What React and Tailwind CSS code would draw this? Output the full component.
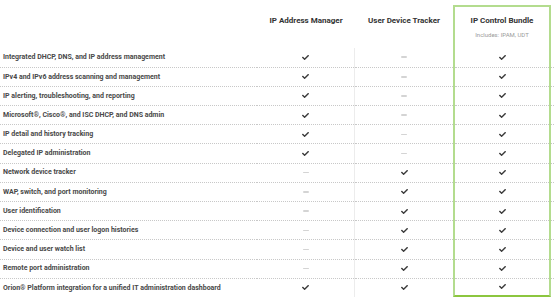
import React from "react";
import { FaCheck } from "react-icons/fa";

const rows = [
  ["Integrated DHCP, DNS, and IP address management", 1, 0],
  ["IPv4 and IPv6 address scanning and management", 1, 0],
  ["IP alerting, troubleshooting, and reporting", 1, 0],
  ["Microsoft®, Cisco®, and ISC DHCP, and DNS admin", 1, 0],
  ["IP detail and history tracking", 1, 0],
  ["Delegated IP administration", 1, 0],
  ["Network device tracker", 0, 1],
  ["WAP, switch, and port monitoring", 0, 1],
  ["User identification", 0, 1],
  ["Device connection and user logon histories", 0, 1],
  ["Device and user watch list", 0, 1],
  ["Remote port administration", 0, 1],
  ["Orion® Platform integration for a unified IT administration dashboard", 1, 1],
];

function Mark({ on }) {
  return on ? (
    <FaCheck className="text-[#3a3a3a]" size={7} />
  ) : (
    <div className="w-[6px] h-[1.5px] bg-[#d4d4d4] rounded-full" />
  );
}

export default function App() {
  return (
    <div
      className="w-[554px] h-[298px] bg-white overflow-hidden"
      style={{ fontFamily: "Roboto, 'Liberation Sans', sans-serif" }}
    >
      <div className="grid grid-cols-[257px_98px_98px_98px_3px] h-[47.5px]">
        <div />
        <div className="flex items-start justify-center pt-[15px] text-[8px] font-bold text-[#333]">
          IP Address Manager
        </div>
        <div className="flex items-start justify-center pt-[15px] text-[8px] font-bold text-[#333]">
          User Device Tracker
        </div>
        <div className="mt-[5px] border-t-2 border-x-2 border-[#b3dc8e] flex flex-col items-center pt-[8px]">
          <div className="text-[8px] font-bold text-[#333] leading-[12px]">IP Control Bundle</div>
          <div className="text-[6px] text-[#9a9a9a] mt-[4px] leading-[8px]">Includes: IPAM, UDT</div>
        </div>
        <div />
      </div>
      {rows.map(([label, a, b], i) => {
        const last = i === rows.length - 1;
        const line = i > 0 ? "border-t border-dotted border-[#c8c8c8]" : "";
        return (
          <div key={i} className="grid grid-cols-[257px_98px_98px_98px_3px] h-[19.2px]">
            <div className={`${line} flex items-center pl-[3px] text-[7px] font-bold text-[#484848] whitespace-nowrap`}>
              {label}
            </div>
            <div className="border-r border-[#ececec]">
              <div className={`${line} h-full flex items-center justify-center`}>
                <Mark on={a} />
              </div>
            </div>
            <div className={`${line} flex items-center justify-center`}>
              <Mark on={b} />
            </div>
            <div
              className={`border-x-2 border-[#b3dc8e] ${last ? "border-b-2 border-b-[#8cc63f]" : ""}`}
            >
              <div className={`${line} h-full flex items-center justify-center`}>
                <Mark on={1} />
              </div>
            </div>
            <div className={line} />
          </div>
        );
      })}
    </div>
  );
}
